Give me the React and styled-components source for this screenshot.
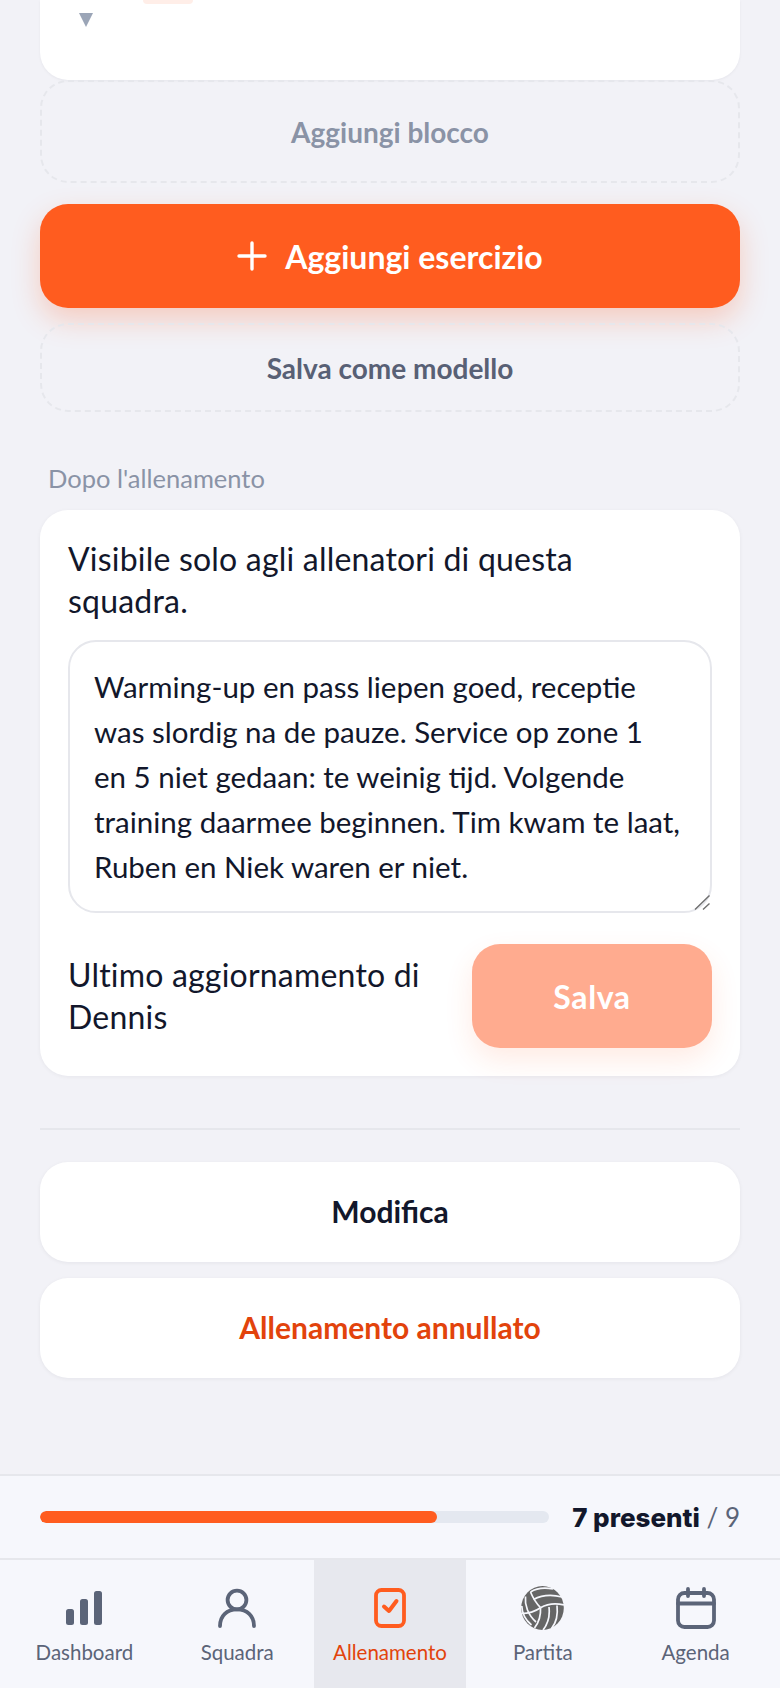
import React from 'react';
import styled, { createGlobalStyle } from 'styled-components';

const GlobalStyle = createGlobalStyle`
  html, body { margin: 0; padding: 0; background: #f2f2f7; }
  * { box-sizing: border-box; }
`;

const uiFont = `"Lato", "Noto Sans", sans-serif`;

const notes = `Warming-up en pass liepen goed, receptie was slordig na de pauze. Service op zone 1
en 5 niet gedaan: te weinig tijd. Volgende training daarmee beginnen. Tim kwam te laat, Ruben en Niek waren er niet.`;

function App() {
  return (
    <Page>
      <GlobalStyle />
      <Scroll>
        <CutCard>
          <Badge />
          <Caret />
        </CutCard>
        <DashedButton tall muted>Aggiungi blocco</DashedButton>
        <PrimaryButton>
          <svg width="30" height="30" viewBox="0 0 30 30" fill="none" stroke="#fff" strokeWidth="3.4" strokeLinecap="round">
            <path d="M15 2v26M2 15h26" />
          </svg>
          Aggiungi esercizio
        </PrimaryButton>
        <DashedButton>Salva come modello</DashedButton>

        <SectionLabel>Dopo l'allenamento</SectionLabel>
        <NotesCard>
          <Hint narrow>Visibile solo agli allenatori di questa squadra.</Hint>
          <NotesWrap>
            <NotesBox readOnly rows={5} value={notes} />
            <ResizeGrip width="16" height="15" viewBox="0 0 16 15" fill="none" stroke="#6f6f6f" strokeWidth="1.400">
              <path d="M1 14.500L15.500 0.500M9 14.500L15.500 8.500" />
            </ResizeGrip>
          </NotesWrap>
          <SaveRow>
            <Hint>Ultimo aggiornamento di Dennis</Hint>
            <SaveButton>Salva</SaveButton>
          </SaveRow>
        </NotesCard>

        <Divider />
        <ActionButton>Modifica</ActionButton>
        <ActionButton danger>Allenamento annullato</ActionButton>
      </Scroll>

      <Attendance>
        <Track><Fill style={{ width: `${(396 / 508) * 100}%` }} /></Track>
        <Count><strong>7 presenti</strong> <span>/ 9</span></Count>
      </Attendance>

      <Nav>
        <NavItem>
          <IconSlot>
            <svg width="36" height="34" viewBox="0 0 36 34" fill="#5b6478">
              <rect x="0" y="18" width="8" height="16" rx="2.5" />
              <rect x="14" y="8" width="8" height="26" rx="2.5" />
              <rect x="28" y="0" width="8" height="34" rx="2.5" />
            </svg>
          </IconSlot>
          Dashboard
        </NavItem>
        <NavItem>
          <IconSlot>
            <svg width="40" height="40" viewBox="0 0 40 40" fill="none" stroke="#5b6478" strokeWidth="3.8" strokeLinecap="round">
              <circle cx="20" cy="12" r="9.4" />
              <path d="M3 38c0-10.500 7-16.600 17-16.600S37 27.500 37 38" />
            </svg>
          </IconSlot>
          Squadra
        </NavItem>
        <NavItem active>
          <IconSlot>
            <svg width="32" height="40" viewBox="0 0 32 40" fill="none" stroke="#ff5c1f">
              <rect x="2" y="2" width="28" height="36" rx="5.500" strokeWidth="3.8" />
              <path d="M10 18.500l5 4.500 7.500-10" strokeWidth="4" strokeLinecap="round" strokeLinejoin="round" />
            </svg>
          </IconSlot>
          Allenamento
        </NavItem>
        <NavItem>
          <IconSlot>
            <svg width="43" height="44" viewBox="0 0 43 44">
              <ellipse cx="21.500" cy="22" rx="21.300" ry="22" fill="#666666" />
              <g fill="none" stroke="#f6f7fc" strokeWidth="1.700">
                <path d="M9.500 6C15 2.500 24 1.500 32 3" />
                <path d="M9.500 6C12 12 15 17 19.500 21.700" />
                <path d="M12.500 13.500C20 9.500 31 8.500 41 11" />
                <path d="M19.500 21.700C26 18 35 17 43 19" />
                <path d="M19.500 21.700C20 29 18 36 13.500 42" />
                <path d="M28 21C29 30 27 38 22 44" />
                <path d="M36 19.500C37 28 35 37 30.500 42.500" />
                <path d="M19.500 21.700C14 25.500 8 27.500 0.500 27.500" />
                <path d="M4.500 10.500C3.500 19 7 29 15 36" />
                <path d="M0.800 20C1 27 4.500 34 10.500 39" />
              </g>
            </svg>
          </IconSlot>
          Partita
        </NavItem>
        <NavItem>
          <IconSlot>
            <svg width="40" height="42" viewBox="0 0 40 42" fill="none" stroke="#5b6478" strokeWidth="3.8" strokeLinecap="round">
              <rect x="2" y="6" width="36" height="34" rx="6.500" />
              <path d="M2 16.500h36M12 2v7M28 2v7" />
            </svg>
          </IconSlot>
          Agenda
        </NavItem>
      </Nav>
    </Page>
  );
}

export default App;

const Page = styled.div`
  width: 780px;
  height: 1688px;
  display: flex;
  flex-direction: column;
  overflow: hidden;
  background: #f2f2f7;
  font-family: ${uiFont};
`;

const Scroll = styled.div`
  flex: 1;
  padding: 0 40px;
  display: flex;
  flex-direction: column;
`;

const CutCard = styled.div`
  height: 80px;
  flex: none;
  padding-left: 39px;
  background: #fff;
  border-radius: 0 0 28px 28px;
  box-shadow: 0 1px 3px rgba(20, 24, 40, 0.05);
  display: flex;
  flex-direction: column;
`;

const Badge = styled.div`
  width: 50px;
  height: 4px;
  margin-left: 64px;
  background: #ffeee8;
  border-radius: 0 0 8px 8px;
`;

const Caret = styled.div`
  width: 14px;
  height: 14px;
  margin-top: 9px;
  background: #9ba5b7;
  clip-path: polygon(0 0, 100% 0, 50% 100%);
`;

const DashedButton = styled.div`
  height: ${props => (props.tall ? '103px' : '89px')};
  flex: none;
  display: flex;
  align-items: center;
  justify-content: center;
  border: 2px dashed #e6e7ec;
  border-radius: 28px;
  font-size: 28px;
  font-weight: 700;
  color: ${props => (props.muted ? '#8a93a6' : '#586075')};
`;

const PrimaryButton = styled.div`
  height: 104px;
  flex: none;
  margin: 21px 0 15px;
  display: flex;
  align-items: center;
  justify-content: center;
  gap: 18px;
  background: #ff5c1f;
  border-radius: 28px;
  box-shadow: 0 12px 28px rgba(255, 92, 31, 0.25);
  color: #fff;
  font-size: 32px;
  font-weight: 700;
`;

const SectionLabel = styled.div`
  margin: 50px 0 16px 8px;
  font-size: 25.500px;
  line-height: 32px;
  color: #8a93a6;
`;

const NotesCard = styled.div`
  height: 566px;
  flex: none;
  padding: 28px;
  background: #fff;
  border-radius: 28px;
  box-shadow: 0 1px 4px rgba(20, 24, 40, 0.05);
  display: flex;
  flex-direction: column;
`;

const Hint = styled.div`
  font-size: 32px;
  letter-spacing: 0.2px;
  line-height: 42px;
  color: #12172b;
  max-width: ${props => (props.narrow ? '580px' : 'none')};
`;

const NotesWrap = styled.div`
  position: relative;
  height: 273px;
  flex: none;
  margin-top: 18px;
`;

const NotesBox = styled.textarea`
  display: block;
  width: 100%;
  height: 100%;
  padding: 22px 22px 22px 24px;
  border: 2px solid #e6e7ec;
  border-radius: 28px;
  background: #fff;
  outline: none;
  resize: none;
  font-family: ${uiFont};
  font-size: 29.500px;
  line-height: 45px;
  color: #12172b;
  overflow: hidden;
`;

const ResizeGrip = styled.svg`
  position: absolute;
  right: 2px;
  bottom: 3px;
`;

const SaveRow = styled.div`
  margin-top: 31px;
  display: flex;
  align-items: center;
  gap: 40px;
  & > div:first-child { flex: 1; }
`;

const SaveButton = styled.div`
  width: 240px;
  height: 104px;
  flex: none;
  display: flex;
  align-items: center;
  justify-content: center;
  background: #ffab8f;
  border-radius: 28px;
  box-shadow: 0 12px 28px rgba(255, 92, 31, 0.12);
  color: #fff;
  font-size: 32px;
  letter-spacing: 0.6px;
  font-weight: 700;
`;

const Divider = styled.div`
  height: 2px;
  flex: none;
  margin: 52px 0 32px;
  background: #e6e7ec;
`;

const ActionButton = styled.div`
  height: 100px;
  flex: none;
  margin-bottom: 16px;
  padding-bottom: 2px;
  display: flex;
  align-items: center;
  justify-content: center;
  background: #fff;
  border-radius: 28px;
  box-shadow: 0 1px 4px rgba(20, 24, 40, 0.06);
  font-size: 30px;
  font-weight: 700;
  color: ${props => (props.danger ? '#e2430c' : '#12172b')};
`;

const Attendance = styled.div`
  height: 84px;
  flex: none;
  padding: 0 40px;
  display: flex;
  align-items: center;
  gap: 23px;
  border-top: 2px solid #e6e7ec;
  background: #f6f7fc;
`;

const Track = styled.div`
  flex: 1;
  height: 12px;
  background: #e4e8f0;
  border-radius: 6px;
  overflow: hidden;
`;

const Fill = styled.div`
  height: 100%;
  background: #ff5c1f;
  border-radius: 6px;
`;

const Count = styled.div`
  font-size: 26px;
  color: #5b6478;
  strong { font-family: "Inter", sans-serif; font-weight: 800; color: #12172b; }
`;

const Nav = styled.nav`
  height: 130px;
  flex: none;
  display: grid;
  grid-template-columns: repeat(5, 1fr);
  padding: 0 8px;
  border-top: 2px solid #e6e7ec;
  background: #f6f7fc;
`;

const NavItem = styled.div`
  display: flex;
  flex-direction: column;
  align-items: center;
  padding-top: 26px;
  gap: 10px;
  font-size: 20.500px;
  line-height: 24px;
  color: ${props => (props.active ? '#e2430c' : '#5b6478')};
  background: ${props => (props.active ? '#e7e8ee' : 'transparent')};
`;

const IconSlot = styled.div`
  height: 44px;
  display: flex;
  align-items: center;
  justify-content: center;
`;
